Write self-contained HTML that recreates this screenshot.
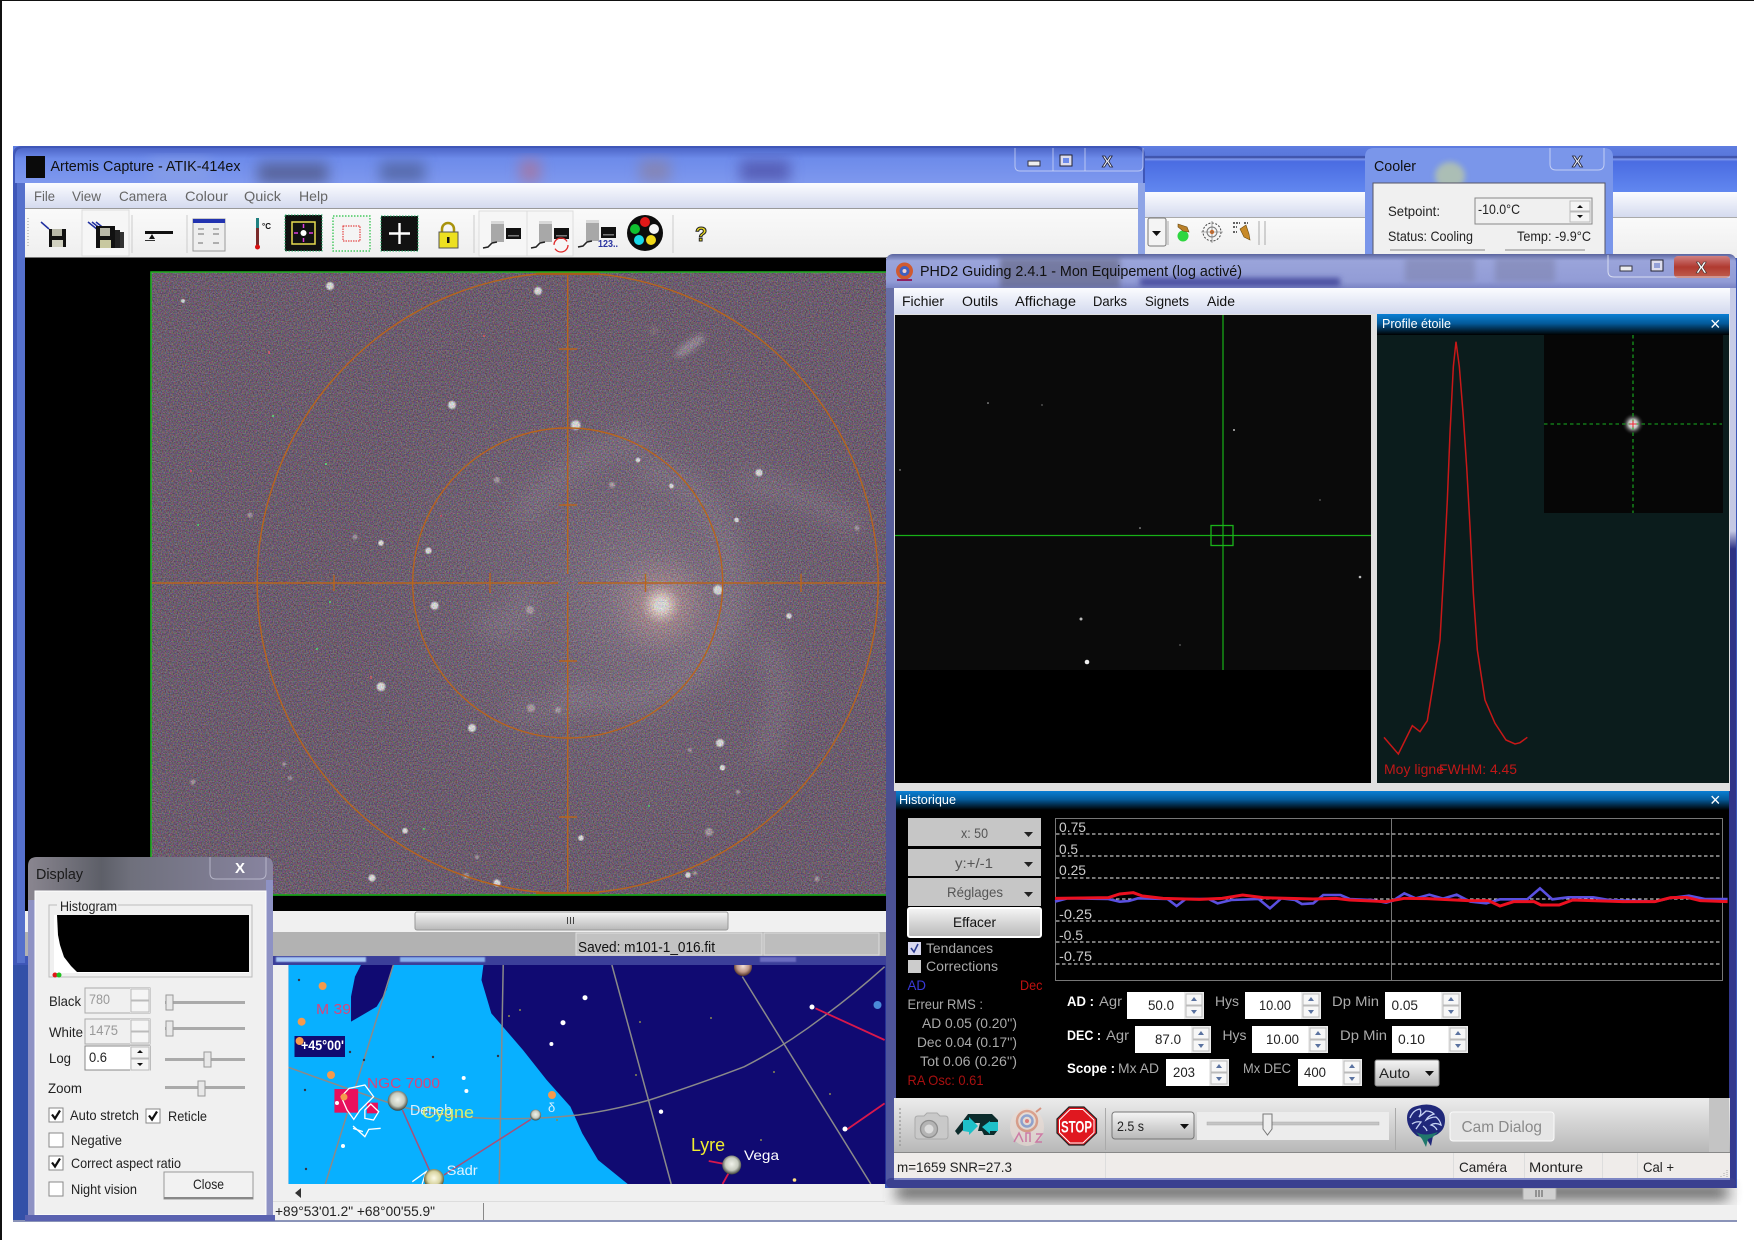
<!DOCTYPE html>
<html lang="fr"><head><meta charset="utf-8"><title>Artemis Capture &amp; PHD2 Guiding</title>
<style>
html,body{margin:0;padding:0;background:#fff;width:1754px;height:1240px;overflow:hidden}
svg{display:block}
text{font-family:"Liberation Sans",sans-serif;font-size:14px;fill:#222}
.g{fill:#666}.w{fill:#fff}.l{fill:#aaa}.s{font-size:13px}.m{font-size:14.5px}.b{font-weight:bold}
</style></head><body>
<svg xmlns="http://www.w3.org/2000/svg" width="1754" height="1240" viewBox="0 0 1754 1240">
<defs>
<linearGradient id="tb" x1="0" y1="0" x2="0" y2="1"><stop offset="0" stop-color="#5e7ce0"/><stop offset=".2" stop-color="#5a78dc"/><stop offset=".235" stop-color="#33459a"/><stop offset=".28" stop-color="#7d96ea"/><stop offset=".33" stop-color="#4a6ce2"/><stop offset="1" stop-color="#6288f0"/></linearGradient>
<linearGradient id="ftb" x1="0" y1="0" x2="0" y2="1"><stop offset="0" stop-color="#4d66c8"/><stop offset=".3" stop-color="#6d8bea"/><stop offset="1" stop-color="#7e98ee"/></linearGradient>
<linearGradient id="mb" x1="0" y1="0" x2="0" y2="1"><stop offset="0" stop-color="#fbfcff"/><stop offset="1" stop-color="#d3d9ee"/></linearGradient>
<linearGradient id="tool" x1="0" y1="0" x2="0" y2="1"><stop offset="0" stop-color="#fafafa"/><stop offset="1" stop-color="#eeeeee"/></linearGradient>
<linearGradient id="phdt" x1="0" y1="0" x2="0" y2="1"><stop offset="0" stop-color="#5a649e"/><stop offset=".2" stop-color="#9aa4da"/><stop offset=".8" stop-color="#929cd6"/><stop offset="1" stop-color="#7a84c4"/></linearGradient>
<linearGradient id="cap" x1="0" y1="0" x2="0" y2="1"><stop offset="0" stop-color="#0a7fd4"/><stop offset=".45" stop-color="#045a9a"/><stop offset="1" stop-color="#000"/></linearGradient>
<linearGradient id="red" x1="0" y1="0" x2="0" y2="1"><stop offset="0" stop-color="#d08080"/><stop offset=".5" stop-color="#b03a30"/><stop offset="1" stop-color="#c06050"/></linearGradient>
<linearGradient id="bar" x1="0" y1="0" x2="0" y2="1"><stop offset="0" stop-color="#ececec"/><stop offset="1" stop-color="#b8b8b8"/></linearGradient>
<linearGradient id="thumb" x1="0" y1="0" x2="0" y2="1"><stop offset="0" stop-color="#f5f5f5"/><stop offset="1" stop-color="#b8b8b8"/></linearGradient>
<linearGradient id="frameR" x1="0" y1="0" x2="0" y2="1"><stop offset="0" stop-color="#c8cde8"/><stop offset=".27" stop-color="#c4c8e4"/><stop offset=".29" stop-color="#2d3184"/><stop offset="1" stop-color="#343a90"/></linearGradient>
<linearGradient id="frameL" x1="0" y1="0" x2="0" y2="1"><stop offset="0" stop-color="#6a72a8"/><stop offset=".5" stop-color="#4a4e8e"/><stop offset="1" stop-color="#5058a0"/></linearGradient>
<linearGradient id="disp" x1="0" y1="0" x2="1" y2="0"><stop offset="0" stop-color="#8a8690"/><stop offset=".3" stop-color="#5d5f68"/><stop offset=".42" stop-color="#6f707c"/><stop offset="1" stop-color="#8884a0"/></linearGradient>
<radialGradient id="core" gradientUnits="userSpaceOnUse" cx="661" cy="605" r="110"><stop offset="0" stop-color="#fff"/><stop offset=".07" stop-color="#ffe8e0"/><stop offset=".18" stop-color="#c8a0a4" stop-opacity=".75"/><stop offset=".5" stop-color="#9a8498" stop-opacity=".3"/><stop offset="1" stop-color="#8a7a88" stop-opacity="0"/></radialGradient>
<radialGradient id="halo" gradientUnits="userSpaceOnUse" cx="620" cy="590" r="280"><stop offset="0" stop-color="#94849c" stop-opacity=".55"/><stop offset="1" stop-color="#7a6c80" stop-opacity="0"/></radialGradient>
<radialGradient id="st" cx=".5" cy=".5" r=".5"><stop offset="0" stop-color="#fff"/><stop offset=".55" stop-color="#fff"/><stop offset="1" stop-color="#fff" stop-opacity="0"/></radialGradient>
<radialGradient id="ball" cx=".5" cy=".45" r=".55"><stop offset="0" stop-color="#f0f2ea"/><stop offset=".6" stop-color="#c8ccc0"/><stop offset="1" stop-color="#3a3f38"/></radialGradient>
<radialGradient id="ball2" cx=".5" cy=".45" r=".55"><stop offset="0" stop-color="#fdfbe8"/><stop offset=".6" stop-color="#d8d4a0"/><stop offset="1" stop-color="#4a4420"/></radialGradient>
<radialGradient id="ball3" cx=".5" cy=".45" r=".55"><stop offset="0" stop-color="#f4e0d8"/><stop offset=".6" stop-color="#c09888"/><stop offset="1" stop-color="#503028"/></radialGradient>
<radialGradient id="pstar" cx=".5" cy=".5" r=".5"><stop offset="0" stop-color="#eee"/><stop offset=".4" stop-color="#c0c0c0"/><stop offset=".7" stop-color="#555" stop-opacity=".6"/><stop offset="1" stop-color="#111" stop-opacity="0"/></radialGradient>
<filter id="noise" x="0" y="0" width="100%" height="100%" color-interpolation-filters="sRGB"><feTurbulence type="fractalNoise" baseFrequency=".75" numOctaves="2" seed="4"/><feColorMatrix type="matrix" values="1.9 0 0 0 -.55 0 1.9 0 0 -.55 0 0 1.9 0 -.55 0 0 0 0 .3"/></filter>
<filter id="b1"><feGaussianBlur stdDeviation=".7"/></filter>
<filter id="b3" x="-30%" y="-30%" width="160%" height="160%"><feGaussianBlur stdDeviation="3"/></filter>
<filter id="b6" x="-30%" y="-30%" width="160%" height="160%"><feGaussianBlur stdDeviation="7"/></filter>
<filter id="b10" x="-30%" y="-30%" width="160%" height="160%"><feGaussianBlur stdDeviation="11"/></filter>
<g id="spin"><rect width="20" height="27" fill="#ececec"/><rect x="2" y="2" width="16" height="11" fill="#f7f7f7" stroke="#bbb"/><rect x="2" y="14" width="16" height="11" fill="#f7f7f7" stroke="#bbb"/><path d="M7 9h6l-3-4zM7 18h6l-3 4z" fill="#5a72a0"/></g>
<g id="sp2"><rect width="20" height="25" fill="#eee"/><rect x="1" y="1" width="18" height="11" fill="#f5f5f5" stroke="#bbb"/><rect x="1" y="13" width="18" height="11" fill="#f5f5f5" stroke="#bbb"/></g>
<g id="cbx"><rect width="14" height="14" fill="#fff" stroke="#888"/></g>
<g id="chk"><path d="M3 6.500l3 4 5-8" fill="none" stroke="#111" stroke-width="2.200"/></g>
<g id="camb"><rect x="0" y="0" width="13" height="21" fill="#a8a8a8"/><rect x="0" y="0" width="13" height="3" fill="#d8d8d8"/><rect x="15" y="7" width="15" height="11" fill="#111"/><rect x="17" y="14" width="11" height="1.500" fill="#777"/><path d="M-8 27l5-1 4-4 5-1" fill="none" stroke="#222" stroke-width="1.500"/></g>
</defs>

<!-- page lines -->
<rect width="1754" height="1240" fill="#fff"/>
<rect width="1754" height="1" fill="#111"/>
<rect width="2" height="1240" fill="#111"/>

<!-- back window -->
<rect x="13" y="146" width="1724" height="1076" fill="#3a56b8"/>
<rect x="13" y="146" width="1724" height="47" fill="url(#tb)"/>
<rect x="13" y="192" width="1724" height="26" fill="url(#mb)"/>
<rect x="13" y="218" width="1724" height="40" fill="url(#tool)"/>
<rect x="13" y="217" width="1724" height="1" fill="#aaa"/>
<rect x="13" y="963" width="15" height="259" fill="#3350a8"/>
<rect x="270" y="1188" width="1467" height="33" fill="#f0f0f0"/>
<rect x="13" y="1220" width="1724" height="2" fill="#8a93b8"/>
<!-- back toolbar icons -->
<rect x="1148" y="218" width="18" height="28" rx="2" fill="#f4f4f4" stroke="#777"/><path d="M1152 231h9l-4.500 5z" fill="#111"/>
<path d="M1168 221v24M1259 221v24M1265 221v24" stroke="#aaa"/>
<circle cx="1183" cy="236" r="5.500" fill="#2fd640"/><path d="M1178 224l9 3 2 5-6-1-5-4z" fill="#b9802a" stroke="#6a4a10" stroke-width=".6"/>
<circle cx="1212" cy="232" r="9" fill="none" stroke="#444" stroke-dasharray="2 1.500"/><circle cx="1212" cy="232" r="5" fill="none" stroke="#777"/><circle cx="1212" cy="232" r="2.200" fill="#e8701c"/><path d="M1201 232h22M1212 221v22" stroke="#666" stroke-width=".6"/>
<path d="M1233 223h7M1233 227h4M1233 232h4M1244 223h4" stroke="#333" stroke-width="1.500" stroke-dasharray="2 1"/><path d="M1240 229l6-4 3 9 1 6-6-3z" fill="#c88a28" stroke="#6a4a10" stroke-width=".6"/>

<!-- sky chart -->
<rect x="270" y="965" width="615" height="236" fill="#f0f0f0"/>
<svg x="288.500" y="965" width="597" height="219" viewBox="288.500 965 597 219">
<rect x="288" y="965" width="598" height="219" fill="#100a72"/>
<g transform="translate(270 880) scale(.39526 .33333)">
<path d="M47 255H540L535 300L560 400L600 455L640 510L700 600L760 680L790 760L830 840L905 912H47Z" fill="#08b0ff"/>
<path d="M230 255H312L295 330L270 380L205 425L205 350L215 290Z" fill="#100a72"/>
<g fill="none" stroke="#8a8a8a" stroke-width="1.500" vector-effect="non-scaling-stroke">
<path d="M47 562Q180 620 330 680Q460 715 580 716Q680 718 780 705Q870 690 960 660Q1090 610 1200 560Q1300 500 1400 410Q1480 340 1555 260" vector-effect="non-scaling-stroke"/>
<path d="M312 255L140 912M590 255L580 912M865 255L1015 912M1195 290L1520 912" vector-effect="non-scaling-stroke"/>
</g>
<path d="M335 690L405 875M440 885L660 718" stroke="#a85078" stroke-width="1.500" fill="none" vector-effect="non-scaling-stroke"/>
<path d="M1380 385L1555 480M1460 748L1555 670M1110 843L1150 852M1160 880L1145 912" stroke="#d8184c" stroke-width="1.800" fill="none" vector-effect="non-scaling-stroke"/>
<rect x="163" y="627" width="60" height="71" fill="#e8105c"/><rect x="245" y="668" width="28" height="32" fill="#e8105c"/>
<g fill="none" stroke="#fff" stroke-width="1.300">
<path d="M180 650L200 625L240 615L262 650L228 690L212 718L195 690Z" vector-effect="non-scaling-stroke"/>
<path d="M240 690L255 672L275 695L262 720L240 715Z" vector-effect="non-scaling-stroke"/>
<path d="M210 738L240 770L250 748L280 745M210 745L235 755" vector-effect="non-scaling-stroke"/>
<path d="M360 905L395 875L385 912" vector-effect="non-scaling-stroke"/>
</g>
</g>
<g fill="#f59a4c"><circle cx="322.600" cy="986" r="4"/><circle cx="301.600" cy="1021.700" r="4"/><circle cx="331" cy="1075" r="4"/><circle cx="552" cy="1095" r="4"/><circle cx="344" cy="1097" r="3.500"/></g>
<circle cx="877.500" cy="1005" r="4" fill="#4a8ad8"/>
<g fill="#fff"><circle cx="585" cy="997.700" r="2.500"/><circle cx="563" cy="1022.700" r="2.500"/><circle cx="551.400" cy="1044" r="2"/><circle cx="661" cy="1111.700" r="2.200"/><circle cx="812" cy="1007" r="2.500"/><circle cx="845" cy="1129" r="2.500"/><circle cx="463.700" cy="1078" r="2"/><circle cx="466.400" cy="1091" r="2"/><circle cx="343" cy="1146" r="2"/><circle cx="794.500" cy="1180" r="1.800" fill="#ffe080"/><circle cx="337" cy="1103" r="2"/></g>
<g fill="#334"><circle cx="299" cy="980" r="1.200"/><circle cx="350" cy="1052" r="1.200"/><circle cx="364" cy="1060" r="1.200"/><circle cx="433" cy="1057" r="1.200"/><circle cx="498" cy="1056" r="1.200"/><circle cx="305" cy="1090" r="1.200"/><circle cx="306" cy="1169" r="1.200"/></g>
<g fill="#8a8a50"><circle cx="520" cy="1010" r="1"/><circle cx="509" cy="1016" r="1"/><circle cx="640" cy="1022" r="1"/><circle cx="711" cy="1018" r="1"/><circle cx="636" cy="1075" r="1"/><circle cx="774" cy="1072" r="1"/><circle cx="830" cy="1094" r="1"/><circle cx="761" cy="1140" r="1"/><circle cx="557" cy="1120" r="1"/></g>
<circle cx="397.700" cy="1100.700" r="10" fill="url(#ball)"/>
<circle cx="535.600" cy="1115" r="5.500" fill="url(#ball)"/>
<circle cx="434" cy="1179" r="10" fill="url(#ball2)"/>
<circle cx="731.700" cy="1165" r="9.500" fill="url(#ball)"/>
<circle cx="743" cy="967" r="9" fill="url(#ball3)"/>
<rect x="294.500" y="1036" width="50.500" height="21" fill="#100a72"/><circle cx="299.600" cy="1041" r="4" fill="#f59a4c"/>
<text x="301" y="1050" textLength="43" lengthAdjust="spacingAndGlyphs" class="w b" style="font-size:14px">+45°00'</text>
<text x="316" y="1014" textLength="35" lengthAdjust="spacingAndGlyphs" style="fill:#d8467c;font-size:15px">M 39</text>
<text x="367" y="1088" textLength="73" lengthAdjust="spacingAndGlyphs" style="fill:#d8467c;font-size:15px">NGC 7000</text>
<text x="410" y="1115" textLength="42" lengthAdjust="spacingAndGlyphs" style="fill:#d8f0ff;font-size:15px">Deneb</text>
<text x="422" y="1118" textLength="52" lengthAdjust="spacingAndGlyphs" style="fill:#d8ee70;font-size:17px">Cygne</text>
<text x="548" y="1112" style="fill:#d8f0ff;font-size:13px">δ</text>
<text x="691" y="1151" textLength="34" lengthAdjust="spacingAndGlyphs" style="fill:#f0ee30;font-size:18px">Lyre</text>
<text x="744" y="1160" textLength="35" lengthAdjust="spacingAndGlyphs" class="w" style="font-size:14px">Vega</text>
<text x="446.700" y="1175" textLength="31" lengthAdjust="spacingAndGlyphs" style="fill:#e0f4ff;font-size:14px">Sadr</text>
</svg>
<path d="M301 1188l-6 5 6 5z" fill="#333"/>
<rect x="270" y="1201" width="615" height="1" fill="#ddd"/>
<text x="275" y="1216" textLength="160" lengthAdjust="spacingAndGlyphs" style="font-size:14px">+89°53'01.2" +68°00'55.9"</text>
<rect x="483" y="1203" width="1" height="17" fill="#888"/>

<!-- Artemis window -->
<path d="M13 155q0-9 9-9H1136q9 0 9 9V965H13Z" fill="#3f57b8"/>
<path d="M15 157q0-9 9-9H1134q9 0 9 9V183H15Z" fill="url(#ftb)"/>
<g filter="url(#b6)" opacity=".7"><rect x="150" y="160" width="60" height="22" fill="#89a0e6"/><rect x="258" y="163" width="70" height="20" fill="#4a4f78"/><rect x="380" y="162" width="45" height="20" fill="#4a5a90"/><rect x="520" y="160" width="20" height="22" fill="#b07090"/><rect x="640" y="160" width="30" height="22" fill="#8a80a0"/><rect x="740" y="160" width="50" height="22" fill="#4a4aa0"/></g>
<rect x="17" y="183" width="1121" height="26" fill="url(#mb)"/>
<rect x="17" y="208" width="1121" height="51" fill="url(#tool)"/>
<rect x="17" y="208" width="1121" height="1" fill="#999"/>
<rect x="17" y="257" width="1121" height="1" fill="#777"/>
<rect x="17" y="183" width="8" height="780" fill="#5570cc"/>
<rect x="1138" y="183" width="7" height="75" fill="#8ea4e6"/>
<rect x="25" y="258" width="861" height="653" fill="#000"/>
<rect x="26" y="156" width="19" height="22" fill="#0a0a0a"/>
<text x="50.500" y="171" textLength="190" lengthAdjust="spacingAndGlyphs" style="font-size:15px;fill:#111">Artemis Capture - ATIK-414ex</text>
<g class="g" style="fill:#6a6a6a">
<text x="34" y="201" textLength="21" lengthAdjust="spacingAndGlyphs" class="g">File</text>
<text x="72" y="201" textLength="29" lengthAdjust="spacingAndGlyphs" class="g">View</text>
<text x="119" y="201" textLength="48" lengthAdjust="spacingAndGlyphs" class="g">Camera</text>
<text x="185" y="201" textLength="43" lengthAdjust="spacingAndGlyphs" class="g">Colour</text>
<text x="244" y="201" textLength="37" lengthAdjust="spacingAndGlyphs" class="g">Quick</text>
<text x="299" y="201" textLength="29" lengthAdjust="spacingAndGlyphs" class="g">Help</text>
</g>
<!-- window buttons -->
<g fill="none" stroke="#dfe4f8" stroke-opacity=".65"><path d="M1015 148v18q0 5 5 5h118q5 0 5-5v-18"/><path d="M1053 148v23M1085 148v23"/></g>
<rect x="1028" y="161" width="12" height="5" fill="#eee" stroke="#334"/>
<rect x="1060" y="155" width="12" height="11" fill="#dde" stroke="#223"/><rect x="1063" y="158" width="6" height="5" fill="#6d8bea"/>
<text x="1102" y="167" class="b" style="font-size:16px;fill:#e8ecf8;stroke:#223;stroke-width:.8">X</text>
<!-- toolbar icons -->
<path d="M132 215v38M474 215v38M673 215v38M187 215v38" stroke="#ccc"/><path d="M28 218v30" stroke="#999" stroke-dasharray="1 2"/>
<rect x="82" y="210" width="47" height="46" fill="#f6f6f6" stroke="#ddd"/>
<path d="M41 222l8 7" stroke="#2030a0" stroke-width="1.500"/>
<rect x="49" y="229" width="17" height="18" fill="#111"/><rect x="52" y="229" width="10" height="7" fill="#b8b8a8"/><rect x="52" y="240" width="11" height="7" fill="#d0d0c0"/>
<path d="M88 222l10 8M92 222l10 8M96 222l10 8" stroke="#2030a0" stroke-width="1.500"/>
<rect x="96" y="226" width="19" height="22" fill="#111"/><rect x="100" y="228" width="10" height="8" fill="#b8b8a8"/><rect x="100" y="240" width="11" height="8" fill="#c8c8a0"/><rect x="115" y="230" width="5" height="18" fill="#222"/><rect x="120" y="232" width="4" height="16" fill="#333"/>
<rect x="145" y="231" width="28" height="3" fill="#111"/><path d="M152 234l-3 5h6z" fill="#111"/><rect x="145" y="240" width="10" height="1" fill="#333"/>
<rect x="193" y="219" width="32" height="32" fill="#eee" stroke="#999"/><rect x="193" y="219" width="32" height="4" fill="#2233b0"/><path d="M198 229h6M213 229h6M198 234h6M213 234h6M198 243h5M213 243h6" stroke="#888" stroke-width="1.200"/>
<rect x="256" y="218" width="3" height="28" fill="#7a2a2a"/><rect x="256" y="218" width="3" height="10" fill="#208080"/><circle cx="257.500" cy="247" r="2.500" fill="#d81010"/><text x="262" y="229" class="b" style="font-size:8px;fill:#111">°C</text>
<rect x="285" y="215" width="37" height="36" fill="#111" stroke="#2a6" stroke-dasharray="1.500 1.500"/><rect x="292" y="222" width="23" height="22" fill="none" stroke="#e8dc50" stroke-width="1.500"/><circle cx="303.500" cy="233" r="3" fill="#fff"/><path d="M303.500 224v4M303.500 238v4M294 233h4M309 233h4" stroke="#e040e0" stroke-width="1.500"/>
<rect x="333" y="216" width="37" height="35" fill="#f4f4f4" stroke="#20c040" stroke-dasharray="1.500 1.500" stroke-width="1.200"/><rect x="343" y="226" width="17" height="15" fill="none" stroke="#e02020" stroke-dasharray="1.500 1"/>
<rect x="381" y="216" width="37" height="35" fill="#111" stroke="#2a6" stroke-dasharray="1.500 1.500"/><path d="M399.500 223v21M389 233.500h21" stroke="#fff" stroke-width="2.400"/>
<path d="M442 232v-3a6 6 0 0 1 12 0v3" fill="none" stroke="#a8920c" stroke-width="2.500"/><rect x="439" y="232" width="19" height="16" fill="#ede020" stroke="#555"/><rect x="447" y="237" width="2.500" height="6" fill="#111"/>
<rect x="479" y="211" width="48" height="45" fill="#f6f6f6" stroke="#ddd"/>
<rect x="527" y="211" width="46" height="45" fill="#f6f6f6" stroke="#ddd"/>
<use href="#camb" x="491" y="221"/>
<use href="#camb" x="539" y="221"/><circle cx="561" cy="245" r="7" fill="none" stroke="#e02828" stroke-width="1.300" stroke-dasharray="18 4"/>
<use href="#camb" x="586" y="220"/><text x="598" y="247" textLength="20" lengthAdjust="spacingAndGlyphs" class="b" style="font-size:10px;fill:#2a34a0">123..</text>
<circle cx="645" cy="233" r="18" fill="#0c0c0c"/><circle cx="645" cy="222" r="5" fill="#e01818"/><circle cx="635" cy="229" r="5" fill="#10c030"/><circle cx="654" cy="229" r="5" fill="#f4f4f4"/><circle cx="639" cy="240" r="5" fill="#18d8e8"/><circle cx="651" cy="240" r="5" fill="#f0d818"/>
<text x="695" y="241" class="b" style="font-size:20px;fill:#e8d820;stroke:#222;stroke-width:1">?</text>

<!-- photo -->
<svg x="151" y="272" width="740" height="623" viewBox="151 272 740 623">
<rect x="151" y="272" width="740" height="623" fill="#6e5870"/>
<rect x="151" y="272" width="740" height="623" fill="url(#halo)"/>
<g filter="url(#b10)" fill="none" stroke="#b0a0b4" stroke-opacity=".3">
<path d="M560 690C640 720 710 680 730 610C745 530 690 470 640 470" stroke-width="24"/>
<path d="M520 520C550 470 610 440 650 440" stroke-width="18"/>
<path d="M480 620C520 640 530 610 520 590" stroke-width="22"/>
<path d="M740 480C790 490 840 510 860 530" stroke-width="20"/>
<path d="M510 710C560 715 590 700 580 700" stroke-width="14"/>
<path d="M760 640C790 680 780 720 760 760" stroke-width="18"/>
</g>
<circle cx="661" cy="605" r="110" fill="url(#core)"/>
<g filter="url(#b3)" opacity=".75"><ellipse cx="690" cy="346" rx="18" ry="5" transform="rotate(-35 690 346)" fill="#b8a8b8"/><circle cx="654" cy="331" r="3" fill="#b89a98"/></g>
<g fill="url(#st)">
<circle cx="330" cy="286" r="5"/><circle cx="538" cy="291" r="5"/><circle cx="183" cy="301" r="2.500"/><circle cx="661" cy="605" r="8"/><circle cx="718" cy="590" r="6"/><circle cx="434.600" cy="605.700" r="5"/><circle cx="381" cy="686.700" r="5.500"/><circle cx="472" cy="728" r="5"/><circle cx="720" cy="743" r="5"/><circle cx="722.500" cy="767.700" r="3.500"/><circle cx="575.700" cy="425" r="6"/><circle cx="759" cy="472.700" r="4.500"/><circle cx="452" cy="405" r="5"/><circle cx="428.400" cy="550.700" r="4"/><circle cx="381" cy="543" r="3.500"/><circle cx="372" cy="878" r="4.500"/><circle cx="497" cy="883" r="4.500"/><circle cx="405" cy="830.700" r="3.500"/><circle cx="688" cy="875" r="3.500"/><circle cx="581" cy="838" r="3.500"/><circle cx="789" cy="616" r="3.500"/><circle cx="736.600" cy="520" r="3"/><circle cx="638" cy="460" r="3"/><circle cx="671.500" cy="486" r="3"/>
</g>
<g fill="#d8c8cc" opacity=".7" filter="url(#b1)"><circle cx="355" cy="537" r="2.500"/><circle cx="250" cy="515" r="2.500"/><circle cx="193" cy="782" r="2.500"/><circle cx="857" cy="528" r="2.500"/><circle cx="817" cy="879" r="2.500"/><circle cx="284" cy="764" r="2"/><circle cx="290" cy="778" r="2"/><circle cx="531" cy="708" r="4"/><circle cx="558" cy="710" r="3"/><circle cx="530" cy="610" r="4"/><circle cx="497" cy="480" r="3"/><circle cx="612" cy="485" r="3"/><circle cx="690" cy="750" r="2"/><circle cx="738" cy="792" r="2"/><circle cx="709" cy="832" r="4"/><circle cx="477" cy="857" r="2"/><circle cx="466" cy="876" r="3"/><circle cx="695" cy="873" r="2"/></g>
<g fill="#e05060"><rect x="190" y="470" width="2" height="2"/><rect x="268" y="351" width="2" height="3"/><rect x="370" y="676" width="2" height="3"/><rect x="440" y="515" width="2" height="2"/><rect x="483" y="335" width="2" height="2"/></g>
<g fill="#50e070"><rect x="272" y="415" width="2" height="2"/><rect x="325" y="463" width="2" height="2"/><rect x="197" y="524" width="2" height="2"/><rect x="329" y="601" width="2" height="2"/><rect x="316" y="648" width="2" height="2"/><rect x="423" y="828" width="2" height="2"/><rect x="648" y="805" width="2" height="2"/></g>
<rect x="151" y="272" width="740" height="623" filter="url(#noise)"/>
<g fill="none" stroke="#b8641c" stroke-width="1.400">
<circle cx="567.700" cy="583" r="310.500"/><circle cx="567.700" cy="583" r="155"/>
<path d="M151 583H558M578 583H886M567.700 272V574M567.700 592V895"/>
<path d="M334 575v16M490 573v20M645.500 574v18M801 574v18M559 505h18M559 661h18M559 817h18M559 349h18"/>
</g>
<rect x="536" y="272" width="63" height="3" fill="#a85a1c"/><rect x="536" y="892" width="63" height="3" fill="#a85a1c"/>
</svg>
<path d="M151 895V272H886" fill="none" stroke="#1fb020" stroke-width="1.600"/>
<path d="M151 895H886" stroke="#19a018" stroke-width="1.800"/>
<!-- scroll + status -->
<rect x="25" y="911" width="861" height="21" fill="#f0f0f0"/>
<rect x="415" y="912" width="313" height="18" rx="2" fill="url(#thumb)" stroke="#999"/>
<path d="M567.500 917v7M570.500 917v7M573.500 917v7" stroke="#444"/>
<rect x="25" y="932" width="861" height="24" fill="#b2b2b2"/>
<rect x="576" y="933" width="186" height="22" fill="#c2c2c2" stroke="#ddd"/><rect x="764" y="933" width="115" height="22" fill="#bdbdbd" stroke="#ddd"/>
<text x="578" y="952" textLength="137" lengthAdjust="spacingAndGlyphs" style="font-size:14.500px;fill:#111">Saved: m101-1_016.fit</text>
<rect x="270" y="956" width="616" height="9" fill="#3b3f9a"/>
<g filter="url(#b1)"><rect x="276" y="957" width="90" height="5" fill="#a9c8f4"/><rect x="400" y="957" width="85" height="5" fill="#8ab0ec"/><rect x="760" y="957" width="36" height="5" fill="#6a6cc0"/></g>

<!-- Display dialog -->
<path d="M28 866q0-9 9-9H264q9 0 9 9V1220H28Z" fill="url(#disp)"/>
<path d="M28 900v320h7V900ZM266 880v340h7V880Z" fill="#8e92c4"/>
<rect x="35" y="891" width="231" height="324" fill="#f0f0f0" stroke="#fff"/>
<rect x="25" y="1215" width="250" height="6" fill="#5a62b0"/>
<path d="M210 857v16q0 6 6 6h44q6 0 6-6v-16" fill="none" stroke="#ccd" stroke-opacity=".7"/>
<text x="235" y="873" class="b w" style="font-size:15px">X</text>
<text x="36" y="879" textLength="47" lengthAdjust="spacingAndGlyphs" style="font-size:14.500px;fill:#1a1a1a">Display</text>
<path d="M57 905H49V977H252V905H118" fill="none" stroke="#bbb"/>
<text x="60" y="911" textLength="57" lengthAdjust="spacingAndGlyphs" style="font-size:14px">Histogram</text>
<rect x="54" y="915" width="195" height="58" fill="#fff"/>
<path d="M57 915H249V972H77L71 966L64 957L60 945L58 935Z" fill="#000"/>
<circle cx="55" cy="975" r="2.500" fill="#e01818"/><circle cx="59" cy="975" r="2.500" fill="#20c020"/>
<text x="49" y="1006" textLength="32" lengthAdjust="spacingAndGlyphs">Black</text>
<text x="49" y="1037" textLength="34" lengthAdjust="spacingAndGlyphs">White</text>
<text x="49" y="1063" textLength="22" lengthAdjust="spacingAndGlyphs">Log</text>
<text x="48" y="1093" textLength="34" lengthAdjust="spacingAndGlyphs">Zoom</text>
<rect x="85" y="988" width="65" height="25" fill="#f0f0f0" stroke="#aaa"/><use href="#sp2" x="130" y="988"/><text x="89" y="1004" textLength="21" lengthAdjust="spacingAndGlyphs" style="fill:#999">780</text>
<rect x="85" y="1019" width="65" height="25" fill="#f0f0f0" stroke="#aaa"/><use href="#sp2" x="130" y="1019"/><text x="89" y="1035" textLength="29" lengthAdjust="spacingAndGlyphs" style="fill:#999">1475</text>
<rect x="85" y="1046" width="65" height="24" fill="#fff" stroke="#888"/><use href="#sp2" x="130" y="1046"/><path d="M137 1053h6l-3-3zM137 1063h6l-3 3z" fill="#111"/><text x="89" y="1062" textLength="18" lengthAdjust="spacingAndGlyphs">0.6</text>
<g fill="#aaa"><rect x="165" y="1001" width="80" height="3"/><rect x="165" y="1027" width="80" height="3"/><rect x="165" y="1058" width="80" height="3"/><rect x="165" y="1086" width="80" height="3"/></g>
<g fill="#e8e8e8" stroke="#999"><rect x="166" y="995" width="7" height="15"/><rect x="166" y="1021" width="7" height="15"/><rect x="204" y="1052" width="7" height="15"/><rect x="198" y="1081" width="7" height="15"/></g>
<use href="#cbx" x="49" y="1108"/><use href="#chk" x="49" y="1108"/><use href="#cbx" x="146" y="1109"/><use href="#chk" x="146" y="1109"/><use href="#cbx" x="49" y="1133"/><use href="#cbx" x="49" y="1156"/><use href="#chk" x="49" y="1156"/><use href="#cbx" x="49" y="1182"/>
<text x="70" y="1120" textLength="69" lengthAdjust="spacingAndGlyphs">Auto stretch</text>
<text x="168" y="1121" textLength="39" lengthAdjust="spacingAndGlyphs">Reticle</text>
<text x="71" y="1145" textLength="51" lengthAdjust="spacingAndGlyphs">Negative</text>
<text x="71" y="1168" textLength="110" lengthAdjust="spacingAndGlyphs">Correct aspect ratio</text>
<text x="71" y="1194" textLength="66" lengthAdjust="spacingAndGlyphs">Night vision</text>
<rect x="164" y="1172" width="89" height="27" fill="#f2f2f2" stroke="#999"/><rect x="164" y="1197" width="89" height="2" fill="#888"/>
<text x="193" y="1189" textLength="31" lengthAdjust="spacingAndGlyphs">Close</text>

<!-- Cooler -->
<path d="M1365 157q0-9 9-9H1604q9 0 9 9V256H1365Z" fill="#7a96ea"/>
<ellipse cx="1450" cy="176" rx="15" ry="14" fill="#b8c8a8" filter="url(#b3)" opacity=".8"/>
<path d="M1550 148v16q0 6 6 6h42q6 0 6-6v-16" fill="none" stroke="#dfe4f8" stroke-opacity=".7"/>
<text x="1572" y="167" class="b" style="font-size:16px;fill:#e8ecf8;stroke:#223;stroke-width:.8">X</text>
<rect x="1373" y="183" width="232" height="73" fill="#f0f0f0" stroke="#556"/>
<text x="1374" y="171" textLength="42" lengthAdjust="spacingAndGlyphs" style="font-size:15px;fill:#111">Cooler</text>
<text x="1388" y="216" textLength="52" lengthAdjust="spacingAndGlyphs">Setpoint:</text>
<rect x="1475" y="198" width="117" height="26" fill="#f0f0f0" stroke="#888"/>
<text x="1478" y="214" textLength="42" lengthAdjust="spacingAndGlyphs">-10.0°C</text>
<rect x="1570" y="201" width="20" height="10" fill="#f4f4f4" stroke="#bbb"/><rect x="1570" y="212" width="20" height="10" fill="#f4f4f4" stroke="#bbb"/><path d="M1577 208h6l-3-3zM1577 215h6l-3 3z" fill="#111"/>
<text x="1388" y="241" textLength="85" lengthAdjust="spacingAndGlyphs">Status: Cooling</text>
<text x="1517" y="241" textLength="74" lengthAdjust="spacingAndGlyphs">Temp: -9.9°C</text>
<path d="M1390 250h95M1505 250h80" stroke="#888"/>

<!-- PHD shadow + window -->
<rect x="896" y="1184" width="832" height="16" fill="#444" opacity=".8" filter="url(#b6)"/>
<rect x="1523" y="1188" width="33" height="12" fill="#d0d0d0" stroke="#aaa"/><path d="M1536 1190v7M1539 1190v7M1542 1190v7" stroke="#555"/>
<rect x="886" y="254" width="850" height="934" rx="7" fill="url(#frameL)"/>
<rect x="1729" y="288" width="7" height="900" fill="url(#frameR)"/>
<path d="M886 263q0-9 9-9H1727q9 0 9 9V288H886Z" fill="url(#phdt)"/>
<g filter="url(#b3)"><rect x="1000" y="258" width="120" height="30" fill="#4a4a60" opacity=".45"/><rect x="1140" y="278" width="200" height="8" fill="#353a90" opacity=".8"/><rect x="1405" y="258" width="70" height="24" fill="#7a80a8" opacity=".5"/><rect x="1495" y="258" width="60" height="24" fill="#7a80a8" opacity=".5"/></g>
<rect x="1674" y="256" width="56" height="22" rx="4" fill="url(#red)"/>
<path d="M1608 255v16q0 6 6 6h116" fill="none" stroke="#e8ecf8" stroke-opacity=".8"/>
<rect x="1620" y="266" width="12" height="5" fill="#eee" stroke="#334"/>
<rect x="1651" y="260" width="12" height="11" fill="#dde" stroke="#223"/><rect x="1654" y="263" width="6" height="5" fill="#93a0d8"/>
<text x="1696" y="273" class="b w" style="font-size:16px;stroke:#333;stroke-width:.6">X</text>
<circle cx="904.500" cy="271" r="8.500" fill="#d05a30"/><circle cx="904.500" cy="271" r="5" fill="#4060c0"/><circle cx="904.500" cy="271" r="2" fill="#f0d0d0"/><path d="M897 280h15" stroke="#902060" stroke-width="2"/>
<text x="920" y="276" textLength="322" lengthAdjust="spacingAndGlyphs" style="font-size:15px;fill:#111">PHD2 Guiding 2.4.1 - Mon Equipement (log activé)</text>
<rect x="894" y="288" width="836" height="26" fill="url(#mb)"/>
<text x="902" y="306" textLength="42" lengthAdjust="spacingAndGlyphs" style="fill:#111">Fichier</text>
<text x="962" y="306" textLength="36" lengthAdjust="spacingAndGlyphs" style="fill:#111">Outils</text>
<text x="1015" y="306" textLength="61" lengthAdjust="spacingAndGlyphs" style="fill:#111">Affichage</text>
<text x="1093" y="306" textLength="34" lengthAdjust="spacingAndGlyphs" style="fill:#111">Darks</text>
<text x="1145" y="306" textLength="44" lengthAdjust="spacingAndGlyphs" style="fill:#111">Signets</text>
<text x="1207" y="306" textLength="28" lengthAdjust="spacingAndGlyphs" style="fill:#111">Aide</text>
<rect x="894" y="314" width="836" height="477" fill="#e0e0e0"/>
<!-- guide view -->
<rect x="895" y="315" width="476" height="468" fill="#000"/>
<rect x="895" y="315" width="476" height="355" fill="#0a0a0a"/>
<g fill="#bbb"><circle cx="988" cy="403" r=".8"/><circle cx="1234" cy="430" r="1"/><circle cx="1360" cy="577" r="1.300"/><circle cx="1081" cy="619" r="1.500"/><circle cx="1087" cy="662" r="2.300" fill="#eee"/><circle cx="1140" cy="528" r=".8"/><circle cx="900" cy="470" r=".7"/><circle cx="1042" cy="405" r=".6"/><circle cx="1180" cy="645" r=".6"/><circle cx="1320" cy="500" r=".6"/></g>
<path d="M1223 315V670M895 535.500H1371" stroke="#17b017" stroke-width="1.200"/>
<rect x="1211" y="525.500" width="22" height="20" fill="none" stroke="#1ab41a" stroke-width="1.300"/>
<!-- profile -->
<rect x="1377" y="314" width="352" height="21" fill="url(#cap)"/>
<text x="1382" y="328" textLength="69" lengthAdjust="spacingAndGlyphs" class="w s">Profile étoile</text>
<text x="1710" y="330" class="w" style="font-size:18px">×</text>
<rect x="1377" y="335" width="352" height="448" fill="#0b1c1c"/>
<rect x="1544" y="335" width="179" height="178" fill="#060606"/>
<circle cx="1633" cy="424" r="11" fill="url(#pstar)"/>
<path d="M1633 335V513M1544 424H1722" stroke="#18b020" stroke-width="1.100" stroke-dasharray="3.500 3"/>
<path d="M1629.500 424h7M1633 420.500v7" stroke="#f02030"/>
<g transform="translate(1370 300) scale(.33333)"><path d="M42 1312L85 1362L127 1277L150 1295L172 1262L190 1150L210 1020L222 800L232 600L240 400L250 200L258 125L268 200L280 350L290 500L300 680L310 880L322 1050L345 1200L375 1270L408 1320L435 1332L450 1328L472 1312" fill="none" stroke="#c81818" stroke-width="4.500"/></g>
<text x="1384" y="774" textLength="60" lengthAdjust="spacingAndGlyphs" style="font-size:14px;fill:#c01818">Moy ligne</text>
<text x="1439" y="774" textLength="78" lengthAdjust="spacingAndGlyphs" style="font-size:14px;fill:#c01818">FWHM: 4.45</text>
<!-- Historique -->
<rect x="896" y="791" width="833" height="307" fill="#000"/>
<rect x="896" y="791" width="833" height="19" fill="url(#cap)"/>
<text x="899" y="804" textLength="57" lengthAdjust="spacingAndGlyphs" class="w s">Historique</text>
<text x="1710" y="806" class="w" style="font-size:18px">×</text>
<g fill="#c6c6c6"><rect x="908" y="818" width="133" height="28"/><rect x="908" y="849" width="133" height="27"/><rect x="908" y="878" width="133" height="28"/></g>
<rect x="908" y="908" width="133" height="29" rx="2" fill="url(#thumb)" stroke="#fff" stroke-width="2"/>
<path d="M1024 832h9l-4.500 5zM1024 862h9l-4.500 5zM1024 892h9l-4.500 5z" fill="#222"/>
<text x="961" y="838" textLength="27" lengthAdjust="spacingAndGlyphs" style="fill:#555">x: 50</text>
<text x="955" y="868" textLength="38" lengthAdjust="spacingAndGlyphs" style="fill:#555">y:+/-1</text>
<text x="947" y="897" textLength="56" lengthAdjust="spacingAndGlyphs" style="fill:#555">Réglages</text>
<text x="953" y="927" textLength="43" lengthAdjust="spacingAndGlyphs" style="fill:#111">Effacer</text>
<rect x="908" y="942" width="13" height="13" fill="#d8d8ee"/><path d="M911 948l3 4 4-8" stroke="#2a3a90" stroke-width="1.600" fill="none"/>
<rect x="908" y="960" width="13" height="13" fill="#ccc"/>
<text x="926" y="953" textLength="67" lengthAdjust="spacingAndGlyphs" class="l">Tendances</text>
<text x="926" y="971" textLength="72" lengthAdjust="spacingAndGlyphs" class="l">Corrections</text>
<text x="907.500" y="990" textLength="18.500" lengthAdjust="spacingAndGlyphs" style="fill:#3a3ad8">AD</text>
<text x="1020" y="990" textLength="22.500" lengthAdjust="spacingAndGlyphs" style="fill:#c01010">Dec</text>
<text x="907.500" y="1009" textLength="75.500" lengthAdjust="spacingAndGlyphs" class="l">Erreur RMS :</text>
<text x="922" y="1028" textLength="95" lengthAdjust="spacingAndGlyphs" class="l">AD  0.05 (0.20'')</text>
<text x="917" y="1047" textLength="100" lengthAdjust="spacingAndGlyphs" class="l">Dec  0.04 (0.17'')</text>
<text x="920" y="1066" textLength="97" lengthAdjust="spacingAndGlyphs" class="l">Tot  0.06 (0.26'')</text>
<text x="907.500" y="1085" textLength="76" lengthAdjust="spacingAndGlyphs" style="fill:#a81010">RA Osc: 0.61</text>
<!-- graph -->
<rect x="1055.500" y="818.500" width="667" height="162" fill="none" stroke="#777"/>
<path d="M1391.500 818V981" stroke="#777"/>
<path d="M1056 834H1721M1056 856H1721M1056 878H1721M1056 899H1721M1056 921H1721M1056 942H1721M1056 964H1721" stroke="#eee" stroke-dasharray="3.500 2.500"/>
<g style="font-size:14px"><text x="1059" y="832" textLength="27" lengthAdjust="spacingAndGlyphs" style="fill:#ccc">0.75</text><text x="1059" y="854" textLength="19" lengthAdjust="spacingAndGlyphs" style="fill:#ccc">0.5</text><text x="1059" y="875" textLength="27" lengthAdjust="spacingAndGlyphs" style="fill:#ccc">0.25</text><text x="1059" y="919" textLength="33" lengthAdjust="spacingAndGlyphs" style="fill:#ccc">-0.25</text><text x="1059" y="940" textLength="24" lengthAdjust="spacingAndGlyphs" style="fill:#ccc">-0.5</text><text x="1059" y="961" textLength="33" lengthAdjust="spacingAndGlyphs" style="fill:#ccc">-0.75</text></g>
<g transform="translate(1040 800) scale(.45537 .33333)" fill="none">
<path vector-effect="non-scaling-stroke" stroke="#5a50e0" stroke-width="2.600" d="M33 305L60 295L150 297L175 305L195 303L215 295L280 297L300 318L320 297L370 297L390 310L420 300L480 297L505 325L530 295L560 300L575 312L600 310L622 285L660 285L680 297L730 300L760 308L775 302L800 280L825 295L855 284L885 296L915 284L945 305L980 310L1010 298L1070 298L1098 265L1125 298L1160 292L1215 292L1250 300L1300 302L1350 305L1380 295L1425 287L1460 297L1510 297"/>
<path vector-effect="non-scaling-stroke" stroke="#ec1020" stroke-width="3" d="M33 295L150 293L175 282L205 278L225 288L270 295L350 298L400 295L445 285L490 293L600 297L650 295L680 300L760 305L800 295L850 296L940 302L985 302L1010 318L1040 305L1085 305L1100 315L1140 315L1170 300L1280 305L1350 305L1385 293L1420 292L1450 302L1510 305"/>
</g>
<!-- guide params -->
<text x="1067" y="1006" class="w b" textLength="27" lengthAdjust="spacingAndGlyphs">AD :</text><text x="1099" y="1006" textLength="23" lengthAdjust="spacingAndGlyphs" class="l">Agr</text>
<text x="1215" y="1006" textLength="24" lengthAdjust="spacingAndGlyphs" class="l">Hys</text>
<text x="1332" y="1006" textLength="47" lengthAdjust="spacingAndGlyphs" class="l">Dp Min</text>
<text x="1067" y="1040" class="w b" textLength="34" lengthAdjust="spacingAndGlyphs">DEC :</text><text x="1106" y="1040" textLength="23" lengthAdjust="spacingAndGlyphs" class="l">Agr</text>
<text x="1222.500" y="1040" textLength="24" lengthAdjust="spacingAndGlyphs" class="l">Hys</text>
<text x="1340" y="1040" textLength="47" lengthAdjust="spacingAndGlyphs" class="l">Dp Min</text>
<text x="1067" y="1073" class="w b" textLength="48" lengthAdjust="spacingAndGlyphs">Scope :</text><text x="1118" y="1073" textLength="41" lengthAdjust="spacingAndGlyphs" class="l">Mx AD</text>
<text x="1243" y="1073" textLength="48" lengthAdjust="spacingAndGlyphs" class="l">Mx DEC</text>
<g fill="#fff">
<rect x="1127" y="992" width="57" height="27"/><rect x="1245" y="992" width="56" height="27"/><rect x="1385" y="992" width="56" height="27"/>
<rect x="1135" y="1026" width="56" height="27"/><rect x="1252" y="1026" width="56" height="27"/><rect x="1392" y="1026" width="56" height="27"/>
<rect x="1166" y="1059" width="43" height="27"/><rect x="1298" y="1059" width="44" height="27"/>
</g>
<use href="#spin" x="1184" y="992"/><use href="#spin" x="1301" y="992"/><use href="#spin" x="1441" y="992"/>
<use href="#spin" x="1191" y="1026"/><use href="#spin" x="1308" y="1026"/><use href="#spin" x="1448" y="1026"/>
<use href="#spin" x="1209" y="1059"/><use href="#spin" x="1342" y="1059"/>
<text x="1148" y="1010" textLength="26" lengthAdjust="spacingAndGlyphs">50.0</text>
<text x="1259" y="1010" textLength="32" lengthAdjust="spacingAndGlyphs">10.00</text>
<text x="1391.500" y="1010" textLength="26.500" lengthAdjust="spacingAndGlyphs">0.05</text>
<text x="1155" y="1044" textLength="26" lengthAdjust="spacingAndGlyphs">87.0</text>
<text x="1266" y="1044" textLength="33" lengthAdjust="spacingAndGlyphs">10.00</text>
<text x="1398" y="1044" textLength="27" lengthAdjust="spacingAndGlyphs">0.10</text>
<text x="1173" y="1077" textLength="22" lengthAdjust="spacingAndGlyphs">203</text>
<text x="1304" y="1077" textLength="22" lengthAdjust="spacingAndGlyphs">400</text>
<rect x="1375" y="1060" width="64" height="26" rx="2" fill="url(#thumb)" stroke="#888"/>
<text x="1379" y="1078" textLength="31" lengthAdjust="spacingAndGlyphs">Auto</text>
<path d="M1425 1071h9l-4.500 5z" fill="#111"/>
<!-- bottom toolbar -->
<rect x="894" y="1098" width="836" height="54" fill="url(#bar)"/>
<rect x="1709" y="1098" width="20" height="54" fill="#c4c4c4"/>
<path d="M900 1108v38" stroke="#888" stroke-dasharray="2 2"/>
<!-- camera -->
<g><path d="M915 1119q0-3 3-3h6l3-3h10l3 3h5q3 0 3 3v17q0 3-3 3h-27q-3 0-3-3z" fill="#c9c9c9" stroke="#aaa"/><circle cx="929" cy="1129" r="8.500" fill="#b4b4b4" stroke="#8e8e8e" stroke-width="1.300"/><circle cx="929" cy="1129" r="4.500" fill="#dcdcdc"/></g>
<!-- arrows -->
<path d="M962 1122l6-8h24l6 6v10l-4 5h-10l-2-4h-4l2-8h-14v4l-8 8-3-4z" fill="#0c2c2c"/>
<path d="M963 1120h6v-3l9 9-9 9v-3l-6-1zM998 1122v9h-8v3l-8-7 8-6v1z" fill="#1ec0c8"/>
<!-- PHD logo -->
<g opacity=".6"><ellipse cx="1027" cy="1127" rx="17" ry="19" fill="#ecdcd4"/><circle cx="1027" cy="1121" r="10" fill="none" stroke="#d87a5a" stroke-width="2.500"/><circle cx="1027" cy="1121" r="5.500" fill="none" stroke="#6080c8" stroke-width="2.500"/><circle cx="1027" cy="1121" r="2" fill="#e04040"/><path d="M1014 1142l5-9 4 9M1026 1142v-9l4 0 0 9M1036 1134h6l-6 8h6" fill="none" stroke="#d04a90" stroke-width="1.500"/><path d="M1036 1112l5-4" stroke="#d06040" stroke-width="2"/></g>
<!-- stop -->
<path d="M1069 1107h15l12.500 12v14l-12.500 12h-15l-12-12v-14z" fill="#e01820" stroke="#222" stroke-width="1.200"/><path d="M1070 1109.500h13l11 10.500v12.500l-11 10.500h-13l-10.500-10.500v-12.500z" fill="none" stroke="#fff" stroke-width="1"/>
<text x="1061" y="1132.500" textLength="31" lengthAdjust="spacingAndGlyphs" class="w b" style="font-size:17px">STOP</text>
<path d="M1105.500 1108v42M1395.500 1108v42" stroke="#aaa"/>
<rect x="1112" y="1112" width="82" height="27" rx="3" fill="url(#thumb)" stroke="#777"/>
<text x="1117" y="1131" textLength="27" lengthAdjust="spacingAndGlyphs" style="font-size:13.500px">2.5 s</text>
<path d="M1180 1124h9l-4.500 5z" fill="#111"/>
<rect x="1197" y="1112" width="192" height="28" fill="#ececec"/>
<rect x="1207" y="1122" width="172" height="3" fill="#c4c4c4" stroke="#aaa" stroke-width=".5"/>
<path d="M1263 1114h9v15l-4.500 6-4.500-6z" fill="#eee" stroke="#777"/>
<!-- brain -->
<path d="M1407 1118q0-10 10-12q10-3 18 0q10 4 10 14q0 9-6 13q-2 2-6 3l-2 10l-5-8q-5-1-9-2q-10-8-10-18z" fill="#20287a"/>
<path d="M1410 1118q3-8 10-9q2 4-1 8q4-3 7-6q5 0 8 3q-6 2-8 6q5-3 10-3q4 3 5 8q-6-3-10 0q4 1 6 5M1412 1124q4-3 9-2q-3 4-5 7M1423 1126q3 2 4 5" fill="none" stroke="#c8d4f4" stroke-width="1.300"/>
<path d="M1416 1132q8 5 22 0l-5 5-5 2-2 8-4-8z" fill="#20786c"/>
<rect x="1450" y="1112" width="104" height="29" rx="3" fill="#e6e6e6" stroke="#fafafa"/>
<text x="1461.500" y="1132" textLength="80.500" lengthAdjust="spacingAndGlyphs" style="font-size:16px;fill:#8a8a8a">Cam Dialog</text>
<!-- status -->
<rect x="894" y="1152" width="836" height="26" fill="#efecea"/><rect x="894" y="1152" width="836" height="1" fill="#888"/>
<path d="M1105.500 1153v25M1453.500 1153v25M1524.500 1153v25M1602.500 1153v25M1637.500 1153v25" stroke="#ddd"/>
<text x="897" y="1172" textLength="115" lengthAdjust="spacingAndGlyphs">m=1659 SNR=27.3</text>
<text x="1459" y="1172" textLength="48" lengthAdjust="spacingAndGlyphs">Caméra</text>
<text x="1529" y="1172" textLength="54" lengthAdjust="spacingAndGlyphs">Monture</text>
<text x="1643" y="1172" textLength="31" lengthAdjust="spacingAndGlyphs">Cal +</text>
<path d="M1727 1170v7M1724 1173v4M1721 1176v1" stroke="#aaa" stroke-dasharray="1 1"/>
<rect x="886" y="1178" width="850" height="10" rx="5" fill="#3a4090"/>
<rect x="894" y="1178" width="836" height="2" fill="#7d86c4"/>
</svg>
</body></html>
